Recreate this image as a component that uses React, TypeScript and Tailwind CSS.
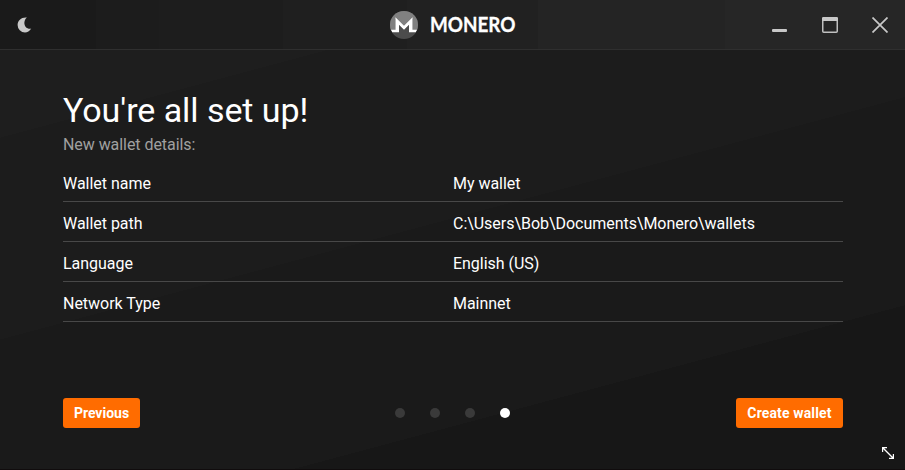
import React from "react";

const details = [
  { label: "Wallet name", value: "My wallet" },
  { label: "Wallet path", value: "C:\\Users\\Bob\\Documents\\Monero\\wallets" },
  { label: "Language", value: "English (US)" },
  { label: "Network Type", value: "Mainnet" },
];

function MoneroMark() {
  return (
    <svg width="28" height="28" viewBox="0 0 28 28" aria-hidden="true">
      <defs>
        <clipPath id="disc">
          <circle cx="14" cy="14" r="14" />
        </clipPath>
      </defs>
      <g clipPath="url(#disc)">
        <rect width="28" height="28" fill="#4c4c4c" />
        <path d="M0 0H28V20H23V7.2L14 16L5 7.2V20H0Z" fill="#808080" />
        <path d="M1 18.700H5.400V6.300L14 14.700L22.600 6.300V18.700H27L26 21.300H19V13.800L14 18.800L9 13.800V21.300H2Z" fill="#fff" />
      </g>
    </svg>
  );
}

function TitleBar() {
  return (
    <header className="flex h-[50px] shrink-0 items-center border-b border-[#2f2f2f] bg-[linear-gradient(90deg,#1a1a1a_96px,#1c1c1c_96px,#1c1c1c_159px,#1d1d1d_159px,#1d1d1d_283px,#1f1f1f_283px,#1f1f1f_407px,#212121_407px,#212121_538px,#242424_538px,#242424_725px,#262626_725px)]">
      <div className="flex flex-1 pl-[17px]">
        <svg width="15" height="16" viewBox="0 0 15 16" aria-label="Dark mode">
          <path d="M9.900 .6C6.700 3.400 6.700 7.900 9 10.300C10.300 11.600 12.200 12.100 14.200 11.600C12.600 14.300 10.400 15.500 8 15.500A7.400 7.400 0 0 1 .6 8.100C.6 3.400 4.600 0 9.900 .6Z" fill="#c8c8c8" />
        </svg>
      </div>
      <div className="flex items-center gap-3">
        <MoneroMark />
        <svg width="86" height="28" viewBox="0 0 86 28" className="overflow-visible">
          <text
            x="0"
            y="21.300"
            fill="#fff"
            textLength="85.5"
            lengthAdjust="spacingAndGlyphs"
            className="font-['Lato',sans-serif] text-[20.5px] font-bold"
            stroke="#fff"
            strokeWidth="0.3"
          >
            MONERO
          </text>
        </svg>
      </div>
      <div className="flex flex-1 items-center justify-end gap-[34px] pr-[17px]">
        <svg width="16" height="16" viewBox="0 0 16 16" aria-label="Minimize">
          <rect x="0" y="12" width="15" height="3" rx="1" fill="#c8c8c8" />
        </svg>
        <svg width="16" height="16" viewBox="0 0 16 16" aria-label="Maximize">
          <rect x="0.750" y="0.750" width="14.500" height="14.500" rx="1" fill="none" stroke="#c0c0c0" strokeWidth="1.500" />
          <path d="M1 0H15L16 1V4H0V1Z" fill="#c8c8c8" />
        </svg>
        <svg width="16" height="16" viewBox="0 0 16 16" aria-label="Close">
          <path d="M.5 .5L15.500 15.500M15.500 .5L.5 15.500" stroke="#c8c8c8" strokeWidth="1.700" />
        </svg>
      </div>
    </header>
  );
}

const buttonClass =
  "flex h-[30px] items-center justify-center rounded-[3px] bg-[#ff6c00] text-[14px] leading-none font-bold text-white";

export default function App() {
  return (
    <div className="relative flex h-[470px] w-[905px] flex-col overflow-hidden border-b border-[#100c0d] bg-[linear-gradient(165deg,#1e1e1e_133px,#1c1c1c_133px,#1c1c1c_328px,#1a1a1a_328px,#1a1a1a_529px,#171717_529px)] font-['Roboto',sans-serif] text-white">
      <TitleBar />
      <main className="flex flex-1 flex-col pr-[62px] pl-[63px] pt-[40px]">
        <h1 className="text-[34px] leading-[40px] tracking-[-0.06px]">You're all set up!</h1>
        <p className="mt-[5px] text-[16px] leading-[20px] tracking-[-0.06px] text-[#a0a0a0]">New wallet details:</p>
        <dl className="mt-[7px]">
          {details.map((row) => (
            <div key={row.label} className="grid h-10 grid-cols-2 border-b border-[#484848] pt-3 text-[16px] leading-[20px] tracking-[-0.03px]">
              <dt>{row.label}</dt>
              <dd>{row.value}</dd>
            </div>
          ))}
        </dl>
        <div className="mt-[76px] grid grid-cols-[332px_1fr_auto] items-center">
          <button className={buttonClass + " w-[77px]"}>Previous</button>
          <div className="flex gap-[25px]">
            <span className="size-[10px] rounded-full bg-[#3a3a3a]" />
            <span className="size-[10px] rounded-full bg-[#3a3a3a]" />
            <span className="size-[10px] rounded-full bg-[#3a3a3a]" />
            <span className="size-[10px] rounded-full bg-white" />
          </div>
          <button className={buttonClass + " w-[107px] tracking-[0.14px]"}>Create wallet</button>
        </div>
      </main>
      <svg className="absolute right-[11px] bottom-[10px]" width="12" height="12" viewBox="0 0 12 12" aria-label="Resize">
        <path d="M.5 5V.5H5M.5 .5L11.500 11.500M7 11.500H11.500V7" fill="none" stroke="#fff" strokeWidth="1.400" />
      </svg>
    </div>
  );
}
